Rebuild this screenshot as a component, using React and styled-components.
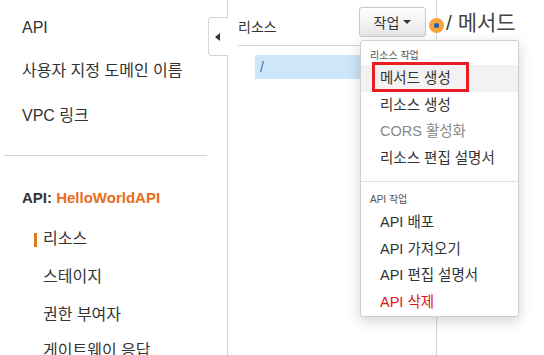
import styled, { createGlobalStyle } from 'styled-components';

const Global = createGlobalStyle`
  html, body { margin: 0; padding: 0; background: #fff; }
  body {
    font-family: "Liberation Sans", "Noto Sans CJK KR", sans-serif;
    color: #333;
  }
`;

const Page = styled.div`
  display: flex;
  width: 544px;
  height: 355px;
  overflow: hidden;
`;

const Sidebar = styled.nav`
  position: relative;
  width: 228px;
  flex-shrink: 0;
  border-right: 1px solid #d5d5d5;
  padding-top: 16px;
  box-sizing: border-box;
`;

const NavItem = styled.div`
  font-size: 16px;
  line-height: 24px;
  padding-left: ${({ $indent }) => ($indent ? '43px' : '22px')};
  margin-bottom: ${({ $gap }) => $gap || 20}px;
  color: #333;
  position: relative;
`;

const ActiveBar = styled.span`
  position: absolute;
  left: 34px;
  top: 6px;
  width: 3px;
  height: 14px;
  background: #e07b1a;
`;

const Divider = styled.hr`
  border: none;
  border-top: 1px solid #d5d5d5;
  margin: 27px 20px 31px 4px;
`;

const ApiTitle = styled.div`
  font-size: 15px;
  font-weight: bold;
  padding-left: 22px;
  margin-bottom: 18px;
  line-height: 22px;
  span { color: #eb6c1a; }
`;

const CollapseTab = styled.button`
  position: absolute;
  right: -1px;
  top: 17px;
  width: 20px;
  height: 39px;
  border: 1px solid #d5d5d5;
  border-right: none;
  border-radius: 4px 0 0 4px;
  background: #fff;
  padding: 0;
  display: flex;
  align-items: center;
  justify-content: center;
`;

const Arrow = styled.span`
  width: 0;
  height: 0;
  border-top: 4px solid transparent;
  border-bottom: 4px solid transparent;
  border-right: 5px solid #333;
  margin-right: 2px;
`;

const ResourcePane = styled.section`
  position: relative;
  width: 209px;
  flex-shrink: 0;
  border-right: 1px solid #d5d5d5;
  box-sizing: border-box;
  padding-left: 10px;
`;

const PaneHeader = styled.div`
  display: flex;
  align-items: center;
  height: 46px;
  border-bottom: 1px solid #d5d5d5;
  font-size: 14px;
  color: #333;
  box-sizing: border-box;
  padding-top: 6px;
`;

const ActionButton = styled.button`
  position: absolute;
  left: 131px;
  top: 7px;
  width: 67px;
  height: 30px;
  border: 1px solid #c8c8c8;
  border-radius: 3px;
  background: linear-gradient(#ffffff, #e6e6e6);
  font-family: inherit;
  font-size: 14px;
  color: #333;
  display: flex;
  align-items: center;
  justify-content: center;
  gap: 4px;
  padding: 0;
`;

const Caret = styled.span`
  width: 0;
  height: 0;
  border-left: 4px solid transparent;
  border-right: 4px solid transparent;
  border-top: 4px solid #333;
`;

const SelectedRow = styled.div`
  margin: 9px 0 0 17px;
  height: 24px;
  background: #cde6fa;
  padding-left: 5px;
  font-size: 14px;
  line-height: 24px;
  color: #4a6d9a;
`;

const Dropdown = styled.div`
  position: absolute;
  left: 132px;
  top: 40px;
  width: 159px;
  height: 277px;
  background: #fff;
  border: 1px solid #cfcfcf;
  border-radius: 3px;
  box-shadow: 0 4px 14px rgba(0, 0, 0, 0.18);
  box-sizing: border-box;
  padding-top: 8px;
  z-index: 10;
`;

const MenuHeader = styled.div`
  font-size: 10px;
  color: #555;
  padding-left: 9px;
  line-height: 14px;
  margin-bottom: 2px;
`;

const MenuItem = styled.div`
  position: relative;
  font-size: 14.5px;
  line-height: 26.5px;
  padding-left: 19px;
  color: ${({ $tone }) =>
    $tone === 'muted' ? '#888' : $tone === 'danger' ? '#e0141c' : '#333'};
  background: ${({ $hover }) => ($hover ? '#f2f2f2' : 'transparent')};
`;

const Highlight = styled.span`
  position: absolute;
  left: 11px;
  top: -3px;
  width: 97px;
  height: 30px;
  border: 3px solid #ea1c24;
  box-sizing: border-box;
`;

const MenuDivider = styled.hr`
  border: none;
  border-top: 1px solid #e0e0e0;
  margin: 10px 0 11px;
`;

const MethodPane = styled.section`
  position: relative;
  flex: 1;
  padding-left: 9px;
`;

const MethodTitle = styled.div`
  font-size: 21px;
  color: #444;
  line-height: 30px;
  margin-top: 8px;
`;

const Dot = styled.span`
  position: absolute;
  left: -8px;
  top: 18px;
  width: 15px;
  height: 15px;
  border-radius: 50%;
  background: #f7a23b;
  display: flex;
  align-items: center;
  justify-content: center;
  &::after {
    content: '';
    width: 5px;
    height: 5px;
    border-radius: 50%;
    background: #1f5fb8;
  }
`;

const resourceActions = [
  { label: '메서드 생성', hover: true, boxed: true },
  { label: '리소스 생성' },
  { label: 'CORS 활성화', tone: 'muted' },
  { label: '리소스 편집 설명서' },
];

const apiActions = [
  { label: 'API 배포' },
  { label: 'API 가져오기' },
  { label: 'API 편집 설명서' },
  { label: 'API 삭제', tone: 'danger' },
];

export default function App() {
  return (
    <>
      <Global />
      <Page>
        <Sidebar>
          <NavItem $gap={19}>API</NavItem>
          <NavItem $gap={21}>사용자 지정 도메인 이름</NavItem>
          <NavItem $gap={0}>VPC 링크</NavItem>
          <Divider />
          <ApiTitle>
            API: <span>HelloWorldAPI</span>
          </ApiTitle>
          <NavItem $indent $gap={14}>
            <ActiveBar />
            리소스
          </NavItem>
          <NavItem $indent $gap={14}>스테이지</NavItem>
          <NavItem $indent $gap={12}>권한 부여자</NavItem>
          <NavItem $indent>게이트웨이 응답</NavItem>
          <CollapseTab aria-label="collapse">
            <Arrow />
          </CollapseTab>
        </Sidebar>

        <ResourcePane>
          <PaneHeader>리소스</PaneHeader>
          <SelectedRow>/</SelectedRow>
          <ActionButton>
            작업 <Caret />
          </ActionButton>
          <Dropdown>
            <MenuHeader>리소스 작업</MenuHeader>
            {resourceActions.map((a) => (
              <MenuItem key={a.label} $hover={a.hover} $tone={a.tone}>
                {a.boxed && <Highlight />}
                {a.label}
              </MenuItem>
            ))}
            <MenuDivider />
            <MenuHeader>API 작업</MenuHeader>
            {apiActions.map((a) => (
              <MenuItem key={a.label} $tone={a.tone}>
                {a.label}
              </MenuItem>
            ))}
          </Dropdown>
        </ResourcePane>

        <MethodPane>
          <Dot />
          <MethodTitle>/ 메서드</MethodTitle>
        </MethodPane>
      </Page>
    </>
  );
}
